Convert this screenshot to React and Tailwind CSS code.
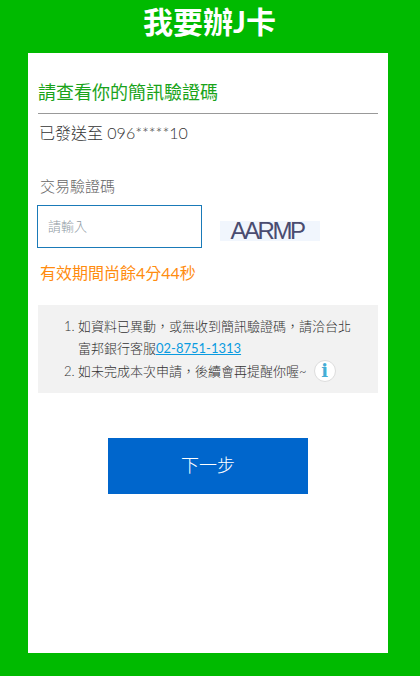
export default function App() {
  return (
    <div className="h-[676px] w-[420px] overflow-hidden bg-[#00ba00] font-['Lato','Noto_Sans_CJK_TC',sans-serif] font-light">
      <h1 className="h-[53px] pr-[1px] text-center text-[30px] font-bold leading-[42px] text-white">我要辦J卡</h1>
      <div className="ml-[28px] h-[600px] w-[360px] bg-white px-[10px]">
        <h2 className="h-[61px] border-b border-[#999999] pt-[26px] text-[18px] font-normal leading-[26px] text-[#1aa31a]">請查看你的簡訊驗證碼</h2>
        <p className="pl-[1px] pt-[7px] text-[16px] leading-[24px] text-[#333333]">已發送至 096*****10</p>
        <label className="block pl-[2px] pt-[30px] text-[15px] leading-[22px] text-[#666666]">交易驗證碼</label>
        <div className="mt-[8px] flex items-center">
          <div className="-ml-[1px] flex h-[43px] w-[165px] items-center border border-[#1a7ab8] pl-[10px] text-[13px] text-[#8f9aa3]">請輸入</div>
          <div className="ml-[18px] mt-[9px] flex h-[20px] w-[100px] items-center justify-center bg-[#f1f6fd] pr-[6px] font-['Liberation_Sans',sans-serif] text-[24px] font-normal tracking-[-2.5px] text-[#4a4c70]">AARMP</div>
        </div>
        <p className="pt-[13px] pl-[2px] text-[16px] font-normal leading-[24px] text-[#ff8c0f]">有效期間尚餘4分44秒</p>
        <div className="mt-[20px] h-[88px] bg-[#f2f2f2] pl-[25px] pr-[20px] pt-[10px] text-[13px] leading-[22px] text-[#333333]">
          <ol className="list-decimal pl-[15px]">
            <li>如資料已異動，或無收到簡訊驗證碼，請洽台北富邦銀行客服<a className="font-normal text-[#0a9be0] underline">02-8751-1313</a></li>
            <li className="mt-[1px]">
              <span className="inline-flex items-center">
                如未完成本次申請，後續會再提醒你喔~
                <span className="ml-[7px] flex h-[22px] w-[22px] items-center justify-center rounded-full border border-[#dddddd] bg-white font-['DejaVu_Serif',serif] text-[18px] font-bold leading-none text-[#45aed6]">i</span>
              </span>
            </li>
          </ol>
        </div>
        <div className="flex justify-center pt-[45px]">
          <button className="h-[56px] w-[200px] bg-[#0066cc] pb-[1px] text-[18px] text-white">下一步</button>
        </div>
      </div>
    </div>
  );
}
